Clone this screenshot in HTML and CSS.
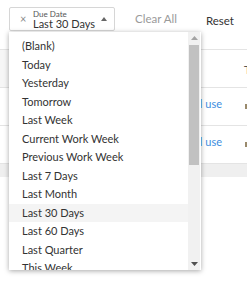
FILE: index.html
```html
<!DOCTYPE html>
<html>
<head>
<meta charset="utf-8">
<link rel="stylesheet" href="styles.css">
</head>
<body>
<div class="page">
  <div class="toolbar">
    <div class="chip">
      <span class="chip-x">×</span>
      <div class="chip-text">
        <span class="chip-label">Due Date</span>
        <span class="chip-value">Last 30 Days</span>
      </div>
      <svg class="chip-caret" width="6" height="4" viewBox="0 0 6 4"><path d="M0 4 L3 0 L6 4 Z" fill="#666"/></svg>
    </div>
    <span class="clear-all">Clear All</span>
    <span class="reset">Reset</span>
  </div>

  <div class="table">
    <div class="row head-row">
      <div class="cell-left"></div>
      <div class="cell-main"></div>
      <div class="cell-right"><span class="head-t">T</span></div>
    </div>
    <div class="row">
      <div class="cell-left plain"></div>
      <div class="cell-main"><span class="link">Personal use</span></div>
      <div class="cell-right"><span class="mini-icon"></span></div>
    </div>
    <div class="row">
      <div class="cell-left plain"></div>
      <div class="cell-main"><span class="link">Personal use</span></div>
      <div class="cell-right"><span class="mini-icon"></span></div>
    </div>
    <div class="band"></div>
  </div>

  <div class="dropdown">
    <ul class="options">
      <li>(Blank)</li>
      <li>Today</li>
      <li>Yesterday</li>
      <li>Tomorrow</li>
      <li>Last Week</li>
      <li>Current Work Week</li>
      <li>Previous Work Week</li>
      <li>Last 7 Days</li>
      <li>Last Month</li>
      <li class="active">Last 30 Days</li>
      <li>Last 60 Days</li>
      <li>Last Quarter</li>
      <li>This Week</li>
      <li>Next Week</li>
    </ul>
    <div class="scrollbar">
      <div class="sb-btn"><svg width="7" height="4" viewBox="0 0 7 4"><path d="M0 4 L3.5 0 L7 4 Z" fill="#a3a3a3"/></svg></div>
      <div class="sb-track"><div class="sb-thumb"></div></div>
      <div class="sb-btn"><svg width="7" height="4" viewBox="0 0 7 4"><path d="M0 0 L3.5 4 L7 0 Z" fill="#505050"/></svg></div>
    </div>
  </div>
</div>
</body>
</html>
```

FILE: styles.css
```css
* { box-sizing: border-box; }
html, body { margin: 0; padding: 0; background: #fff; }
body {
  font-family: Lato, "Open Sans", sans-serif;
  color: #333;
  width: 247px;
  height: 283px;
  overflow: hidden;
}
.page { position: relative; width: 247px; height: 283px; overflow: hidden; }

.toolbar {
  height: 49px;
  display: flex;
  align-items: flex-start;
  padding: 7px 0 0 9px;
  white-space: nowrap;
}
.chip {
  flex: 0 0 106px;
  height: 24px;
  border: 1px solid #d6d6d6;
  border-radius: 2px;
  display: flex;
  align-items: flex-start;
  padding: 2px 0 0 10px;
}
.chip-x {
  font-size: 11px;
  color: #8a8a8a;
  width: 13px;
  line-height: 11px;
  margin-top: 3px;
  flex-shrink: 0;
}
.chip-text {
  display: flex;
  flex-direction: column;
  flex-shrink: 0;
  white-space: nowrap;
}
.chip-label { font-size: 8px; color: #555; line-height: 8px; }
.chip-value { font-size: 11px; color: #333; line-height: 11px; }
.chip-caret { margin-left: 6px; margin-top: 7px; flex-shrink: 0; }

.clear-all {
  font-size: 11.5px;
  line-height: 14px;
  color: #9a9a9a;
  margin-left: 20px;
  margin-top: 5px;
}
.reset {
  font-size: 11.5px;
  line-height: 14px;
  color: #333;
  margin-left: 29px;
  margin-top: 7px;
}

.table { border-top: 1px solid #e4e4e4; }
.row {
  display: flex;
  height: 38px;
  border-bottom: 1px solid #e4e4e4;
}
.cell-left { width: 9px; background: #f6f6f6; }
.cell-left.plain { background: #fff; }
.cell-main { flex: 1; display: flex; align-items: center; justify-content: flex-end; padding-right: 20px; }
.cell-right { width: 5px; position: relative; }
.head-t { position: absolute; left: 2px; top: 12px; font-size: 12px; color: #555; }
.link { font-size: 11px; color: #3d8de0; margin-top: -6px; white-space: nowrap; }
.mini-icon {
  position: absolute; left: 3px; top: 16px;
  width: 4px; height: 5px; background: #9a8a6c;
}
.band { height: 13px; background: #efefef; }

.dropdown {
  position: absolute;
  left: 9px;
  top: 32px;
  width: 192px;
  height: 238px;
  background: #fff;
  box-shadow: 0 1px 5px rgba(0,0,0,0.35);
  display: flex;
  overflow: hidden;
}
.options {
  list-style: none;
  margin: 0;
  padding: 5px 0 0 0;
  flex: 1;
  overflow: hidden;
}
.options li {
  height: 18.5px;
  line-height: 18.5px;
  font-size: 11px;
  color: #333;
  padding-left: 13px;
  white-space: nowrap;
}
.options li.active { background: #f4f4f4; }

.scrollbar {
  width: 12px;
  display: flex;
  flex-direction: column;
  background: #f1f1f1;
  margin-right: 1px;
}
.sb-btn {
  height: 12px;
  display: flex;
  align-items: center;
  justify-content: center;
}
.sb-track { flex: 1; position: relative; }
.sb-thumb {
  position: absolute;
  left: 1px; right: 1px;
  top: 1px;
  height: 120px;
  background: #c1c1c1;
}
```
